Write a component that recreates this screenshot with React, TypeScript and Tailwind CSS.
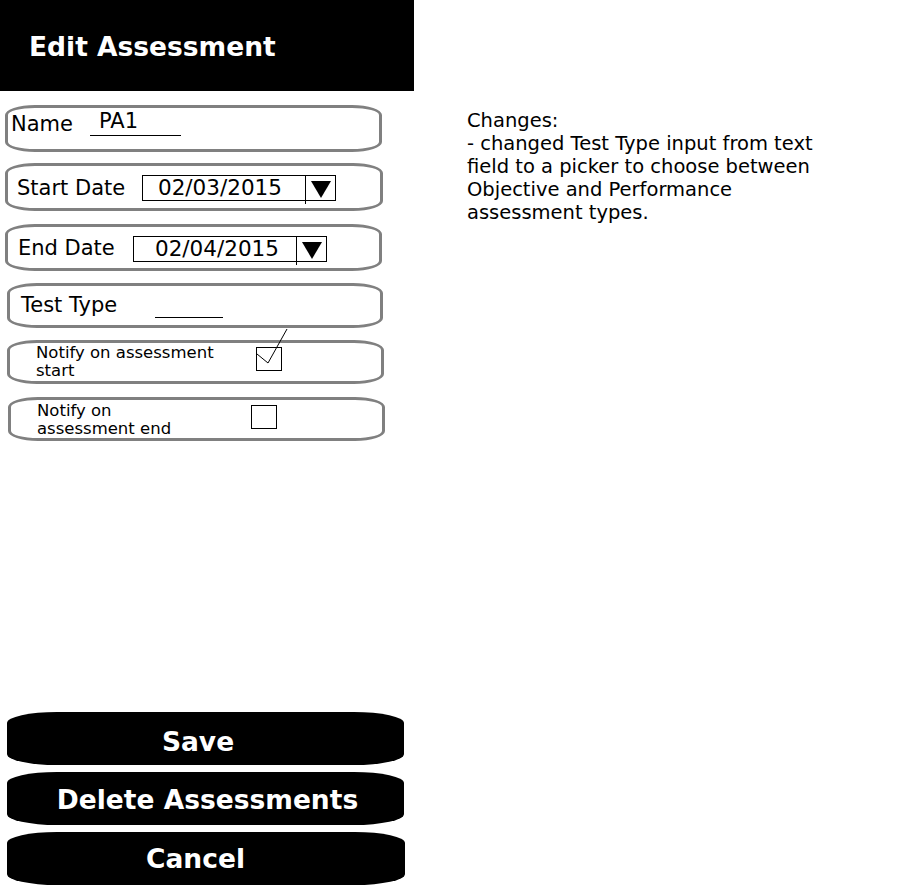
import React from 'react'

const row = "flex items-start border-[3px] border-[#808080] rounded-[30px/10px] bg-white"

function Caret() {
  return (
    <svg width="20" height="17" viewBox="0 0 20 17" className="block">
      <polygon points="0,0 20,0 10,17" fill="#000" />
    </svg>
  )
}

function DatePicker({ value, pad }: { value: string; pad: number }) {
  return (
    <div className="flex h-[26px] w-[194px] items-start border border-black">
      <span className="w-[162px] text-[21.5px] leading-[24px]" style={{ paddingLeft: pad }}>{value}</span>
      <div className="h-[28px] w-px shrink-0 bg-black" />
      <div className="flex flex-1 justify-center pt-[5px]">
        <Caret />
      </div>
    </div>
  )
}

function Checkbox({ checked }: { checked?: boolean }) {
  return (
    <div className="relative h-[24px] w-[26px] border border-black">
      {checked && (
        <svg width="40" height="50" viewBox="0 0 40 50" className="absolute left-[-1px] top-[-20px] overflow-visible">
          <polyline points="1,26 12,35 31,1" fill="none" stroke="#000" strokeWidth="1" />
        </svg>
      )}
    </div>
  )
}

export default function App() {
  return (
    <div className="flex min-h-[896px] w-[898px] bg-white font-['DejaVu_Sans',Verdana,sans-serif] text-black">
      <div className="flex w-[414px] shrink-0 flex-col">
        <div className="h-[91px] bg-black pl-[29px] pt-[31px]">
          <h1 className="text-[26.5px] font-bold leading-[32px] text-white">Edit Assessment</h1>
        </div>

        <div className={row + " ml-[5px] mt-[14px] h-[47px] w-[377px] pl-[3px]"}>
          <span className="mt-[4px] w-[79px] text-[21px] leading-[24px]">Name</span>
          <div className="mt-[1px] h-[27px] w-[91px] border-b border-black pl-[9px] text-[21px] leading-[24px]">PA1</div>
        </div>

        <div className={row + " ml-[5px] mt-[11px] h-[48px] w-[378px] pl-[9px]"}>
          <span className="mt-[10px] w-[125px] text-[21px] leading-[24px]">Start Date</span>
          <div className="mt-[9px]">
            <DatePicker value="02/03/2015" pad={15} />
          </div>
        </div>

        <div className={row + " ml-[5px] mt-[13px] h-[47px] w-[377px] pl-[10px]"}>
          <span className="mt-[9px] w-[115px] text-[21px] leading-[24px]">End Date</span>
          <div className="mt-[9px]">
            <DatePicker value="02/04/2015" pad={21} />
          </div>
        </div>

        <div className={row + " ml-[7px] mt-[12px] h-[45px] w-[376px] pl-[11px]"}>
          <span className="mt-[7px] w-[134px] text-[21px] leading-[24px]">Test Type</span>
          <div className="mt-[31px] h-px w-[68px] bg-black" />
        </div>

        <div className={row + " ml-[7px] mt-[12px] h-[44px] w-[377px] pl-[26px]"}>
          <span className="mt-[1px] w-[220px] text-[16.5px] leading-[18px]">Notify on assessment<br />start</span>
          <div className="mt-[4px]">
            <Checkbox checked />
          </div>
        </div>

        <div className={row + " ml-[8px] mt-[13px] h-[44px] w-[377px] pl-[26px]"}>
          <span className="mt-[2px] w-[214px] text-[16.5px] leading-[18px]">Notify on<br />assessment end</span>
          <div className="mt-[5px]">
            <Checkbox />
          </div>
        </div>

        <button className="ml-[7px] mt-[271px] flex h-[53px] w-[397px] items-center justify-center rounded-[50px/11px] bg-black pr-[15px] pt-[6px] text-[26.5px] font-bold text-white">Save</button>
        <button className="ml-[7px] mt-[7px] flex h-[53px] w-[397px] items-center justify-center rounded-[50px/11px] bg-black pl-[4px] pt-[3px] text-[26.5px] font-bold text-white">Delete Assessments</button>
        <button className="ml-[7px] mt-[7px] flex h-[53px] w-[398px] items-center justify-center rounded-[50px/11px] bg-black pr-[21px] text-[26.5px] font-bold text-white">Cancel</button>
      </div>

      <div className="pl-[53px] pt-[109px] text-[19.5px] leading-[23px]">
        <p>Changes:</p>
        <p>
          - changed Test Type input from text<br />
          field to a picker to choose between<br />
          Objective and Performance<br />
          assessment types.
        </p>
      </div>
    </div>
  )
}
